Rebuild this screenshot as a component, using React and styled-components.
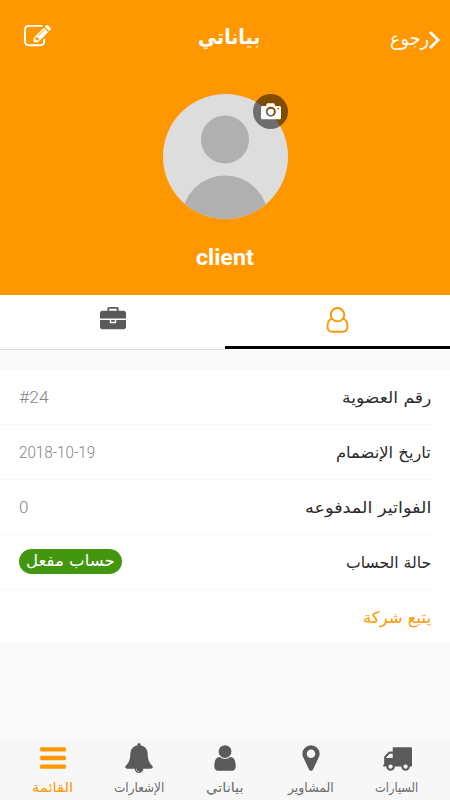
import React, { useLayoutEffect, useRef, useState } from "react";
import styled, { createGlobalStyle } from "styled-components";

const ORANGE = "#ff9800";
const DARK = "#5a5a5a";

const Global = createGlobalStyle`
  * { box-sizing: border-box; }
  html, body { margin: 0; padding: 0; }
  body { background: #fafafa; font-family: "DejaVu Sans", sans-serif; }
`;

const Screen = styled.div`
  width: 450px;
  height: 800px;
  display: flex;
  flex-direction: column;
  background: #fafafa;
  overflow: hidden;
`;

const Header = styled.header`
  height: 295px;
  flex: none;
  background: ${ORANGE};
  color: #fff;
  display: flex;
  flex-direction: column;
  align-items: center;
`;

const TopBar = styled.div`
  width: 100%;
  height: 76px;
  display: grid;
  grid-template-columns: 174px 62px 1fr;
  align-items: center;
  padding: 0 10px 0 24px;
`;

const EditButton = styled.button`
  justify-self: start;
  width: 27px;
  height: 27px;
  padding: 0;
  margin-top: -3px;
  border: 0;
  background: none;
  color: #fff;
  display: flex;
`;

const BackButton = styled.button`
  justify-self: end;
  padding: 0;
  border: 0;
  background: none;
  color: #fff;
  display: flex;
  align-items: center;
  font-family: inherit;
  svg { margin-top: 3px; }
`;

const TextBox = styled.span`
  display: flex;
  flex: none;
  width: ${(p) => p.$width}px;
  height: ${(p) => p.$size * 1.5}px;
  line-height: ${(p) => p.$size * 1.5}px;
  font-family: ${(p) => p.$font || '"DejaVu Sans"'}, sans-serif;
  font-size: ${(p) => p.$size}px;
  font-weight: ${(p) => p.$weight || 400};
  margin-top: ${(p) => p.$shift || 0}px;
  white-space: nowrap;
`;

const TextRun = styled.span`
  flex: none;
  transform-origin: ${(p) => (p.$rtl ? "right" : "left")} center;
`;

function FitText({ children, width, size, weight, font, shift, ltr }) {
  const ref = useRef(null);
  const [scale, setScale] = useState(1);
  useLayoutEffect(() => {
    setScale(width / ref.current.offsetWidth);
  }, [children, width]);
  return (
    <TextBox dir={ltr ? "ltr" : "rtl"} $width={width} $size={size} $weight={weight} $font={font} $shift={shift}>
      <TextRun ref={ref} $rtl={!ltr} style={{ transform: `scaleX(${scale})` }}>{children}</TextRun>
    </TextBox>
  );
}

const AvatarWrap = styled.div`
  position: relative;
  width: 125px;
  height: 125px;
  margin: 18px 0 22px 1px;
  svg { display: block; }
`;

const CameraBadge = styled.button`
  position: absolute;
  top: 0;
  right: 0;
  width: 35px;
  height: 35px;
  padding: 0;
  border: 0;
  border-radius: 50%;
  background: rgba(0, 0, 0, 0.5);
  display: flex;
  align-items: center;
  justify-content: center;
`;

const Tabs = styled.nav`
  height: 55px;
  flex: none;
  display: grid;
  grid-template-columns: 1fr 1fr;
  background: #fff;
`;

const Tab = styled.button`
  height: ${(p) => (p.$active ? 54 : 55)}px;
  padding: 12px 0 0;
  border: 0;
  border-bottom: ${(p) => (p.$active ? "3px solid #000" : "1px solid #ddd")};
  background: none;
  color: ${(p) => (p.$active ? ORANGE : DARK)};
  display: flex;
  justify-content: center;
  align-items: flex-start;
`;

const List = styled.ul`
  list-style: none;
  margin: 20px 0 0;
  padding: 0;
  height: 273px;
  flex: none;
  background: #fff;
`;

const Row = styled.li`
  height: 55px;
  margin-right: 18px;
  padding: 0 1px 0 19px;
  border-bottom: 1px solid ${(p) => (p.$last ? "transparent" : "#f8f8f8")};
  display: flex;
  justify-content: space-between;
  align-items: center;
  color: ${(p) => (p.$last ? ORANGE : "#2b2b2b")};
`;

const Value = styled.span`
  color: #858585;
  display: flex;
`;

const Badge = styled.span`
  width: 103px;
  height: 25px;
  margin-bottom: 2px;
  padding: 0 7px;
  border-radius: 13px;
  background: #43970f;
  color: #fff;
  display: flex;
  align-items: center;
`;

const Footer = styled.nav`
  margin-top: auto;
  height: 62px;
  flex: none;
  background: #f7f7f7;
  display: grid;
  grid-template-columns: repeat(5, 86px);
  padding-left: 10px;
`;

const FooterItem = styled.button`
  border: 0;
  padding: 3px 0 0;
  background: none;
  color: ${(p) => (p.$active ? ORANGE : DARK)};
  display: flex;
  flex-direction: column;
  align-items: center;
`;

const FooterIcon = styled.span`
  height: 33px;
  display: flex;
  align-items: center;
`;

const FooterLabel = styled.span`
  display: flex;
  margin-top: 4px;
  color: ${(p) => (p.$active ? ORANGE : "#6b6b6b")};
`;

const paths = {
  edit: "M888 1184l116-116-152-152-116 116v56h96v96h56zm440-720q-16-16-33 1l-350 350q-17 17-1 33t33-1l350-350q17-17 1-33zm80 594v190q0 119-84.5 203.5t-203.5 84.5h-832q-119 0-203.5-84.5t-84.5-203.5v-832q0-119 84.5-203.5t203.5-84.5h832q63 0 117 25 15 7 18 23 3 17-9 29l-49 49q-14 14-32 8-23-6-45-6h-832q-66 0-113 47t-47 113v832q0 66 47 113t113 47h832q66 0 113-47t47-113v-126q0-13 9-22l64-64q15-15 35-7t20 29zm-96-738l288 288-672 672h-288v-288zm444 132l-92 92-288-288 92-92q28-28 68-28t68 28l152 152q28 28 28 68t-28 68z",
  briefcase: "M640 256h512v-128h-512v128zm1152 640v480q0 66-47 113t-113 47h-1472q-66 0-113-47t-47-113v-480h672v160q0 26 19 45t45 19h320q26 0 45-19t19-45v-160h672zm-768 0v128h-256v-128h256zm768-480v384h-1792v-384q0-66 47-113t113-47h352v-160q0-40 28-68t68-28h576q40 0 68 28t28 68v160h352q66 0 113 47t47 113z",
  user: "M1536 1399q0 109-62.5 187t-150.5 78h-854q-88 0-150.5-78t-62.5-187q0-85 8.5-160.5t31.5-152 58.5-131 94-89 134.5-34.5q131 128 313 128t313-128q76 0 134.5 34.5t94 89 58.5 131 31.5 152 8.5 160.5zm-256-887q0 159-112.5 271.5t-271.5 112.5-271.5-112.5-112.5-271.5 112.5-271.5 271.5-112.5 271.5 112.5 112.5 271.5z",
  pin: "M1152 640q0-106-75-181t-181-75-181 75-75 181 75 181 181 75 181-75 75-181zm256 0q0 109-33 179l-364 774q-16 33-47.5 52t-67.5 19-67.5-19-46.5-52l-365-774q-33-70-33-179 0-212 150-362t362-150 362 150 150 362z",
  truck: "M640 1408q0-52-38-90t-90-38-90 38-38 90 38 90 90 38 90-38 38-90zm-384-512h384v-256h-158q-13 0-22 9l-195 195q-9 9-9 22v30zm1280 512q0-52-38-90t-90-38-90 38-38 90 38 90 90 38 90-38 38-90zm256-1088v1024q0 15-4 26.5t-13.5 18.5-16.5 11.5-23.5 6-22.5 2-25.5 0-22.5-.5q0 106-75 181t-181 75-181-75-75-181h-384q0 106-75 181t-181 75-181-75-75-181h-64q-3 0-22.5.5t-25.5 0-22.5-2-23.5-6-16.5-11.5-13.5-18.5-4-26.5q0-26 19-45t45-19v-320q0-8-.5-35t0-38 2.5-34.5 6.5-37 14-30.5 22.5-30l198-198q19-19 50.5-32t58.5-13h160v-192q0-26 19-45t45-19h1024q26 0 45 19t19 45z",
  bell: "M912 1696q0-16-16-16-59 0-101.5-42.5t-42.5-101.5q0-16-16-16t-16 16q0 73 51.5 124.5t124.5 51.5q16 0 16-16zm816-288q0 52-38 90t-90 38h-448q0 106-75 181t-181 75-181-75-75-181h-448q-52 0-90-38t-38-90q50-42 91-88t85-119.5 74.5-158.5 50-206 19.5-260q0-152 117-282.5t307-158.5q-8-19-8-39 0-40 28-68t68-28 68 28 28 68q0 20-8 39 190 28 307 158.5t117 282.5q0 139 19.5 260t50 206 74.5 158.5 85 119.5 91 88z",
  bars: "M1664 1344v128q0 26-19 45t-45 19h-1408q-26 0-45-19t-19-45v-128q0-26 19-45t45-19h1408q26 0 45 19t19 45zm0-512v128q0 26-19 45t-45 19h-1408q-26 0-45-19t-19-45v-128q0-26 19-45t45-19h1408q26 0 45 19t19 45zm0-512v128q0 26-19 45t-45 19h-1408q-26 0-45-19t-19-45v-128q0-26 19-45t45-19h1408q26 0 45 19t19 45z",
};

const Icon = ({ name, size = 30 }) => (
  <svg width={size} height={size} viewBox="0 0 1792 1792" fill="currentColor"><path d={paths[name]} /></svg>
);

const PersonOutline = () => (
  <svg width="23" height="27" viewBox="0 0 23 27" fill="none" stroke="currentColor" strokeWidth="1.9">
    <circle cx="11.5" cy="7.7" r="6.7" />
    <path d="M5.8 11.8C2.8 12.6 1.5 15.8 1.5 19.6Q1.5 24.8 6.3 24.8H16.7Q21.5 24.8 21.5 19.6C21.5 15.8 20.2 12.6 17.2 11.8" />
  </svg>
);

const Camera = () => (
  <svg width="20" height="17" viewBox="0 0 20 17">
    <path fill="#fff" fillRule="evenodd" d="M1.5 3H5L5.7.9Q6 .2 6.8.2H12.4Q13.2.2 13.5.9L14.2 3H18.5Q20 3 20 4.5V15Q20 16.3 18.5 16.3H1.5Q0 16.3 0 15V4.5Q0 3 1.5 3ZM9.8 3.8A5 5 0 1 0 9.8 13.8A5 5 0 1 0 9.8 3.8ZM9.8 5.7A3.1 3.1 0 1 1 9.8 11.9A3.1 3.1 0 1 1 9.8 5.7ZM17.2 4.8A.8.8 0 1 0 17.2 6.4A.8.8 0 1 0 17.2 4.8Z" />
  </svg>
);

const Avatar = () => (
  <svg width="125" height="125" viewBox="0 0 125 125">
    <defs><clipPath id="avatar"><circle cx="62.5" cy="62.5" r="62.5" /></clipPath></defs>
    <g clipPath="url(#avatar)">
      <rect width="125" height="125" fill="#ddd" />
      <circle cx="62" cy="45.5" r="24" fill="#b0b0b0" />
      <circle cx="62" cy="124.5" r="43" fill="#b0b0b0" />
    </g>
  </svg>
);

const rows = [
  { label: "رقم العضوية", width: 89, value: "#24", valueWidth: 30 },
  { label: "تاريخ الإنضمام", width: 95, value: "2018-10-19", valueWidth: 76 },
  { label: "الفواتير المدفوعه", width: 126, value: "0", valueWidth: 9 },
  { label: "حالة الحساب", width: 85, badge: "حساب مفعل" },
  { label: "يتبع شركة", width: 68 },
];

const items = [
  { label: "القائمة", width: 41, icon: "bars", active: true },
  { label: "الإشعارات", width: 50, icon: "bell" },
  { label: "بياناتي", width: 38, icon: "user" },
  { label: "المشاوير", width: 46, icon: "pin" },
  { label: "السيارات", width: 43, icon: "truck" },
];

export default function App() {
  return (
    <Screen>
      <Global />
      <Header>
        <TopBar>
          <EditButton><Icon name="edit" size={27} /></EditButton>
          <FitText width={62} size={21} weight={700}>بياناتي</FitText>
          <BackButton>
            <FitText width={39} size={19}>رجوع</FitText>
            <svg width="11" height="18" viewBox="0 0 11 18" fill="none" stroke="#fff" strokeWidth="2.8"><path d="M1 1L9 9L1 17" /></svg>
          </BackButton>
        </TopBar>
        <AvatarWrap>
          <Avatar />
          <CameraBadge><Camera /></CameraBadge>
        </AvatarWrap>
        <FitText width={58} size={22} weight={700} font="Roboto" ltr>client</FitText>
      </Header>
      <Tabs>
        <Tab><Icon name="briefcase" size={26} /></Tab>
        <Tab $active><PersonOutline /></Tab>
      </Tabs>
      <List>
        {rows.map((r, i) => (
          <Row key={r.label} $last={i === rows.length - 1}>
            <Value>
              {r.value && <FitText width={r.valueWidth} size={17} shift={2} font="Roboto" weight={300} ltr>{r.value}</FitText>}
              {r.badge && <Badge><FitText width={89} size={16}>{r.badge}</FitText></Badge>}
            </Value>
            <FitText width={r.width} size={16} shift={1}>{r.label}</FitText>
          </Row>
        ))}
      </List>
      <Footer>
        {items.map((it) => (
          <FooterItem key={it.label} $active={it.active}>
            <FooterIcon><Icon name={it.icon} /></FooterIcon>
            <FooterLabel $active={it.active}><FitText width={it.width} size={13}>{it.label}</FitText></FooterLabel>
          </FooterItem>
        ))}
      </Footer>
    </Screen>
  );
}
